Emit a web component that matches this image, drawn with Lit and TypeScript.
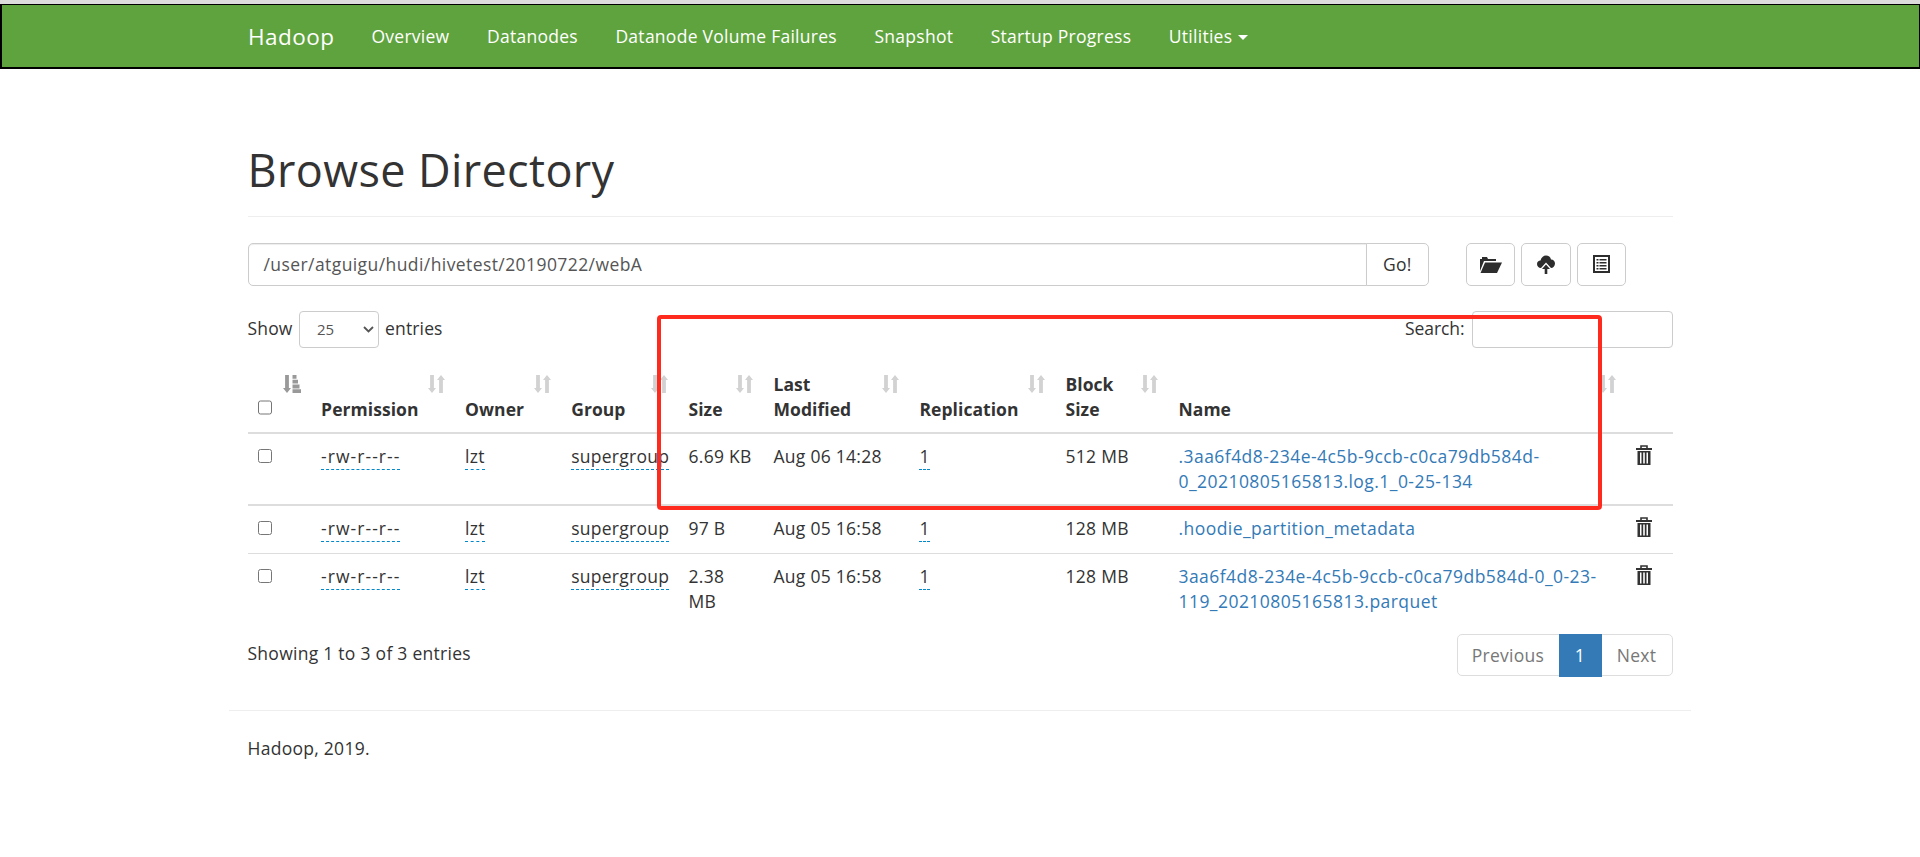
import { LitElement, html, css } from "lit";
import { customElement } from "lit/decorators.js";

const sortIcon = html`<svg class="sort" viewBox="0 0 17 18" aria-hidden="true"><path d="M2.1 0H5.9V13H8L4 18L0 13H2.1Z"/><path d="M13 0L17 5H14.9V18H11.1V5H9Z"/></svg>`;
const sortActive = html`<svg class="sort active" viewBox="0 0 18 18" aria-hidden="true"><path d="M2.1 0H5.9V13H8L4 18L0 13H2.1Z"/><path d="M9.5 0h4v3.8h-4zM9.5 4.8h5.5v3.8h-5.5zM9.5 9.6h7v3.8h-7zM9.5 14.2h8.5v3.8h-8.5z"/></svg>`;
const trash = html`<svg class="trash" viewBox="0 0 16 20" aria-hidden="true"><path d="M5 3V1h6v2" fill="none" stroke="#333" stroke-width="1.6"/><path d="M0 3h16v2H0z"/><path fill-rule="evenodd" d="M1.5 6h13v14h-13zM4 7.5v11h1.5v-11zM7.2 7.5v11h1.6v-11zM10.5 7.5v11H12v-11z"/></svg>`;

const columns = [
  { label: "", w: 63.6, sort: "active" },
  { label: "Permission", w: 144, sort: "on" },
  { label: "Owner", w: 106.1, sort: "on" },
  { label: "Group", w: 117.3, sort: "on" },
  { label: "Size", w: 85, sort: "on" },
  { label: "Last<br>Modified", w: 146, sort: "on" },
  { label: "Replication", w: 146, sort: "on" },
  { label: "Block<br>Size", w: 113, sort: "on" },
  { label: "Name", w: 458, sort: "on" },
  { label: "", w: 46, sort: "" },
];

const rows = [
  { size: ["6.69 KB"], mod: "Aug 06 14:28", block: "512 MB", name: [".3aa6f4d8-234e-4c5b-9ccb-c0ca79db584d-", "0_20210805165813.log.1_0-25-134"] },
  { size: ["97 B"], mod: "Aug 05 16:58", block: "128 MB", name: [".hoodie_partition_metadata"] },
  { size: ["2.38", "MB"], mod: "Aug 05 16:58", block: "128 MB", name: ["3aa6f4d8-234e-4c5b-9ccb-c0ca79db584d-0_0-23-", "119_20210805165813.parquet"] },
];

@customElement("app-root")
export class AppRoot extends LitElement {
  static styles = css`
    :host {
      display: block;
      position: relative;
      min-height: 857px;
      background: #fff;
      font-family: "Open Sans", "Noto Sans", sans-serif;
      font-size: 17.5px;
      line-height: 25px;
      color: #333;
      letter-spacing: 0.27px;
    }
    .strip { height: 4px; background: #dcdcdc; }
    .nav {
      background: #5fa33e;
      border: 1px solid #000;
      border-width: 1px 1px 2px 2px;
      height: 65px;
      box-sizing: border-box;
    }
    .nav-in {
      width: 1462.5px;
      margin: 0 auto;
      padding: 0 18.75px;
      box-sizing: border-box;
      display: flex;
      align-items: center;
      height: 62px;
      color: #fff;
    }
    .brand { font-size: 22.5px; margin-right: 37px; letter-spacing: 0.45px; }
    .links { display: flex; gap: 37.5px; align-items: center; }
    .caret {
      display: inline-block;
      margin-left: 6px;
      vertical-align: middle;
      border-top: 5px solid #fff;
      border-left: 5px solid transparent;
      border-right: 5px solid transparent;
    }
    .page { width: 1462.5px; margin: 0 auto; padding: 0 18.75px; box-sizing: border-box; }
    .head { padding-top: 76px; padding-bottom: 21px; border-bottom: 1.25px solid #eee; }
    h1 { margin: 0; font-size: 45px; font-weight: 400; line-height: 50px; letter-spacing: 0.37px; }
    .tools { display: flex; margin-top: 26px; height: 42.5px; }
    .path {
      width: 1119.5px;
      display: flex;
      align-items: center;
      box-sizing: border-box;
      border: 1.25px solid #ccc;
      border-radius: 5px 0 0 5px;
      padding: 0 15px;
      color: #555;
      letter-spacing: 0.42px;
      box-shadow: inset 0 1px 1px rgba(0, 0, 0, 0.075);
    }
    .btn {
      box-sizing: border-box;
      border: 1.25px solid #ccc;
      background: #fff;
      border-radius: 5px;
      display: flex;
      align-items: center;
      justify-content: center;
      color: #333;
      height: 42.5px;
    }
    .go { width: 62.5px; margin-left: -1px; border-radius: 0 5px 5px 0; margin-right: 37px; }
    .iconbtn { width: 49.5px; margin-right: 5.5px; }
    .iconbtn.w { width: 50px; margin-right: 6px; }
    .iconbtn.last { margin-right: 0; }
    .iconbtn svg { display: block; fill: #2d2d2d; }
    .filters { display: flex; justify-content: space-between; align-items: center; margin-top: 25px; height: 37px; }
    .len { display: flex; align-items: center; gap: 6px; letter-spacing: 0.15px; }
    .txt { margin-bottom: 2px; }
    .sel { position: relative; display: block; height: 37px; }
    .sel svg { position: absolute; right: 5px; top: 15px; width: 11px; height: 7px; fill: none; stroke: #555; stroke-width: 1.8; }
    select {
      display: block;
      appearance: none;
      -webkit-appearance: none;
      width: 80.5px;
      height: 37px;
      box-sizing: border-box;
      border: 1.25px solid #ccc;
      border-radius: 4px;
      background: #fff;
      color: #555;
      font: 15px "Open Sans", sans-serif;
      padding: 0 0 0 17.5px;
    }
    .search { display: flex; align-items: center; gap: 7px; letter-spacing: -0.07px; }
    .search span.box {
      width: 201px;
      height: 37px;
      box-sizing: border-box;
      border: 1.25px solid #ccc;
      border-radius: 4px;
      display: block;
    }
    table { border-collapse: collapse; table-layout: fixed; width: 1425px; margin-top: 14px; }
    th, td { padding: 10px; text-align: left; vertical-align: top; white-space: nowrap; }
    th { position: relative; vertical-align: bottom; font-weight: 700; letter-spacing: 0.05px; border-bottom: 2.5px solid #ddd; }
    td { border-bottom: 1.25px solid #ddd; padding-bottom: 12px; }
    tr.first td { border-bottom-width: 2.5px; padding-bottom: 10px; }
    tbody tr:last-child td { border-bottom: 0; }
    .sort { position: absolute; top: 13px; right: 10px; width: 17px; height: 18px; fill: #d2d2d2; }
    .sort.active { width: 18px; fill: #999; }
    input[type="checkbox"] { display: block; margin: 5px 0 0; width: 14.5px; height: 14.5px; }
    th input[type="checkbox"] { margin: 0 0 7px; }
    .ed { border-bottom: 1.25px dashed #08c; padding-bottom: 1px; }
    .perm { letter-spacing: 1.05px; }
    a { color: #337ab7; text-decoration: none; letter-spacing: 0.45px; }
    .trash { display: block; width: 16px; height: 20px; fill: #333; margin-top: 1px; }
    .info { display: flex; justify-content: space-between; align-items: flex-start; margin-top: 8.9px; }
    .showing { margin-top: 7.1px; }
    .pager { display: flex; height: 42px; box-sizing: border-box; border: 1.25px solid #ddd; border-radius: 5px; color: #777; }
    .pager span { display: flex; align-items: center; justify-content: center; }
    .pager .prev { width: 101px; }
    .pager .cur { width: 43px; margin: -1.25px 0; background: #337ab7; color: #fff; }
    .pager .next { width: 70px; }
    .foot { width: 1462.5px; margin: 0 auto; margin-top: 34px; border-top: 1.25px solid #eee; padding: 24.9px 18.75px 0; box-sizing: border-box; }
    .mark {
      position: absolute;
      left: 656.5px;
      top: 314.5px;
      width: 945px;
      height: 195px;
      box-sizing: border-box;
      border: 4.5px solid #ff2a1e;
      border-radius: 4px;
      pointer-events: none;
    }
  `;

  render() {
    return html`
      <div class="strip"></div>
      <div class="nav">
        <div class="nav-in">
          <span class="brand">Hadoop</span>
          <div class="links">
            <span>Overview</span><span>Datanodes</span><span>Datanode Volume Failures</span><span>Snapshot</span><span>Startup Progress</span>
            <span>Utilities<i class="caret"></i></span>
          </div>
        </div>
      </div>
      <div class="page">
        <div class="head"><h1>Browse Directory</h1></div>
        <div class="tools">
          <div class="path">/user/atguigu/hudi/hivetest/20190722/webA</div>
          <div class="btn go">Go!</div>
          <div class="btn iconbtn">
            <svg width="23" height="17" viewBox="0 0 23 17"><path d="M1 15V3H3V1H8L9 3H17V5H5L1 15Z"/><path d="M6 6.5H23L18 17H1.5Z"/></svg>
          </div>
          <div class="btn iconbtn w">
            <svg width="18" height="19" viewBox="0 0 18 19"><path d="M4 13C1.5 13 0 11 0 9C0 7 1.5 5.5 3.5 5.5C4 2.5 6.5 .5 9 .5C11.5 .5 13.5 2 14 4.5C16.5 4.5 18 6.5 18 8.5C18 11 16 13 14 13L9 7.5Z"/><path d="M9 9.5L13 14H10.3V19H7.7V14H5Z"/></svg>
          </div>
          <div class="btn iconbtn last">
            <svg width="17" height="18" viewBox="0 0 17 18"><path fill-rule="evenodd" d="M0 0H17V18H0ZM2 2V16H15V2Z"/><path d="M3.5 4h2v1.4h-2zM6.5 4h7v1.4h-7zM3.5 7h2v1.4h-2zM6.5 7h7v1.4h-7zM3.5 10h2v1.4h-2zM6.5 10h7v1.4h-7zM3.5 13h2v1.4h-2zM6.5 13h7v1.4h-7z"/></svg>
          </div>
        </div>
        <div class="filters">
          <div class="len">
            <span class="txt">Show</span>
            <span class="sel"><select><option>25</option></select><svg viewBox="0 0 11 7" aria-hidden="true"><path d="M1 1L5.5 5.5L10 1"/></svg></span>
            <span class="txt">entries</span>
          </div>
          <div class="search"><span class="txt">Search:</span><span class="box"></span></div>
        </div>
        <table>
          <colgroup>${columns.map((c) => html`<col style="width:${c.w}px" />`)}</colgroup>
          <thead>
            <tr>
              ${columns.map(
                (c, i) => html`<th>
                  ${i === 0 ? html`<input type="checkbox" />` : ""}
                  ${c.label.split("<br>").map((l, j) => html`${j ? html`<br />` : ""}${l}`)}
                  ${c.sort === "active" ? sortActive : c.sort === "on" ? sortIcon : ""}
                </th>`
              )}
            </tr>
          </thead>
          <tbody>
            ${rows.map(
              (r, i) => html`<tr class=${i === 0 ? "first" : ""}>
                <td><input type="checkbox" /></td>
                <td><span class="ed perm">-rw-r--r--</span></td>
                <td><span class="ed">lzt</span></td>
                <td><span class="ed">supergroup</span></td>
                <td>${r.size.map((s, j) => html`${j ? html`<br />` : ""}${s}`)}</td>
                <td>${r.mod}</td>
                <td><span class="ed">1</span></td>
                <td>${r.block}</td>
                <td><a>${r.name.map((s, j) => html`${j ? html`<br />` : ""}${s}`)}</a></td>
                <td>${trash}</td>
              </tr>`
            )}
          </tbody>
        </table>
        <div class="info">
          <div class="showing">Showing 1 to 3 of 3 entries</div>
          <div class="pager"><span class="prev">Previous</span><span class="cur">1</span><span class="next">Next</span></div>
        </div>
      </div>
      <div class="foot">Hadoop, 2019.</div>
      <div class="mark"></div>
    `;
  }
}
